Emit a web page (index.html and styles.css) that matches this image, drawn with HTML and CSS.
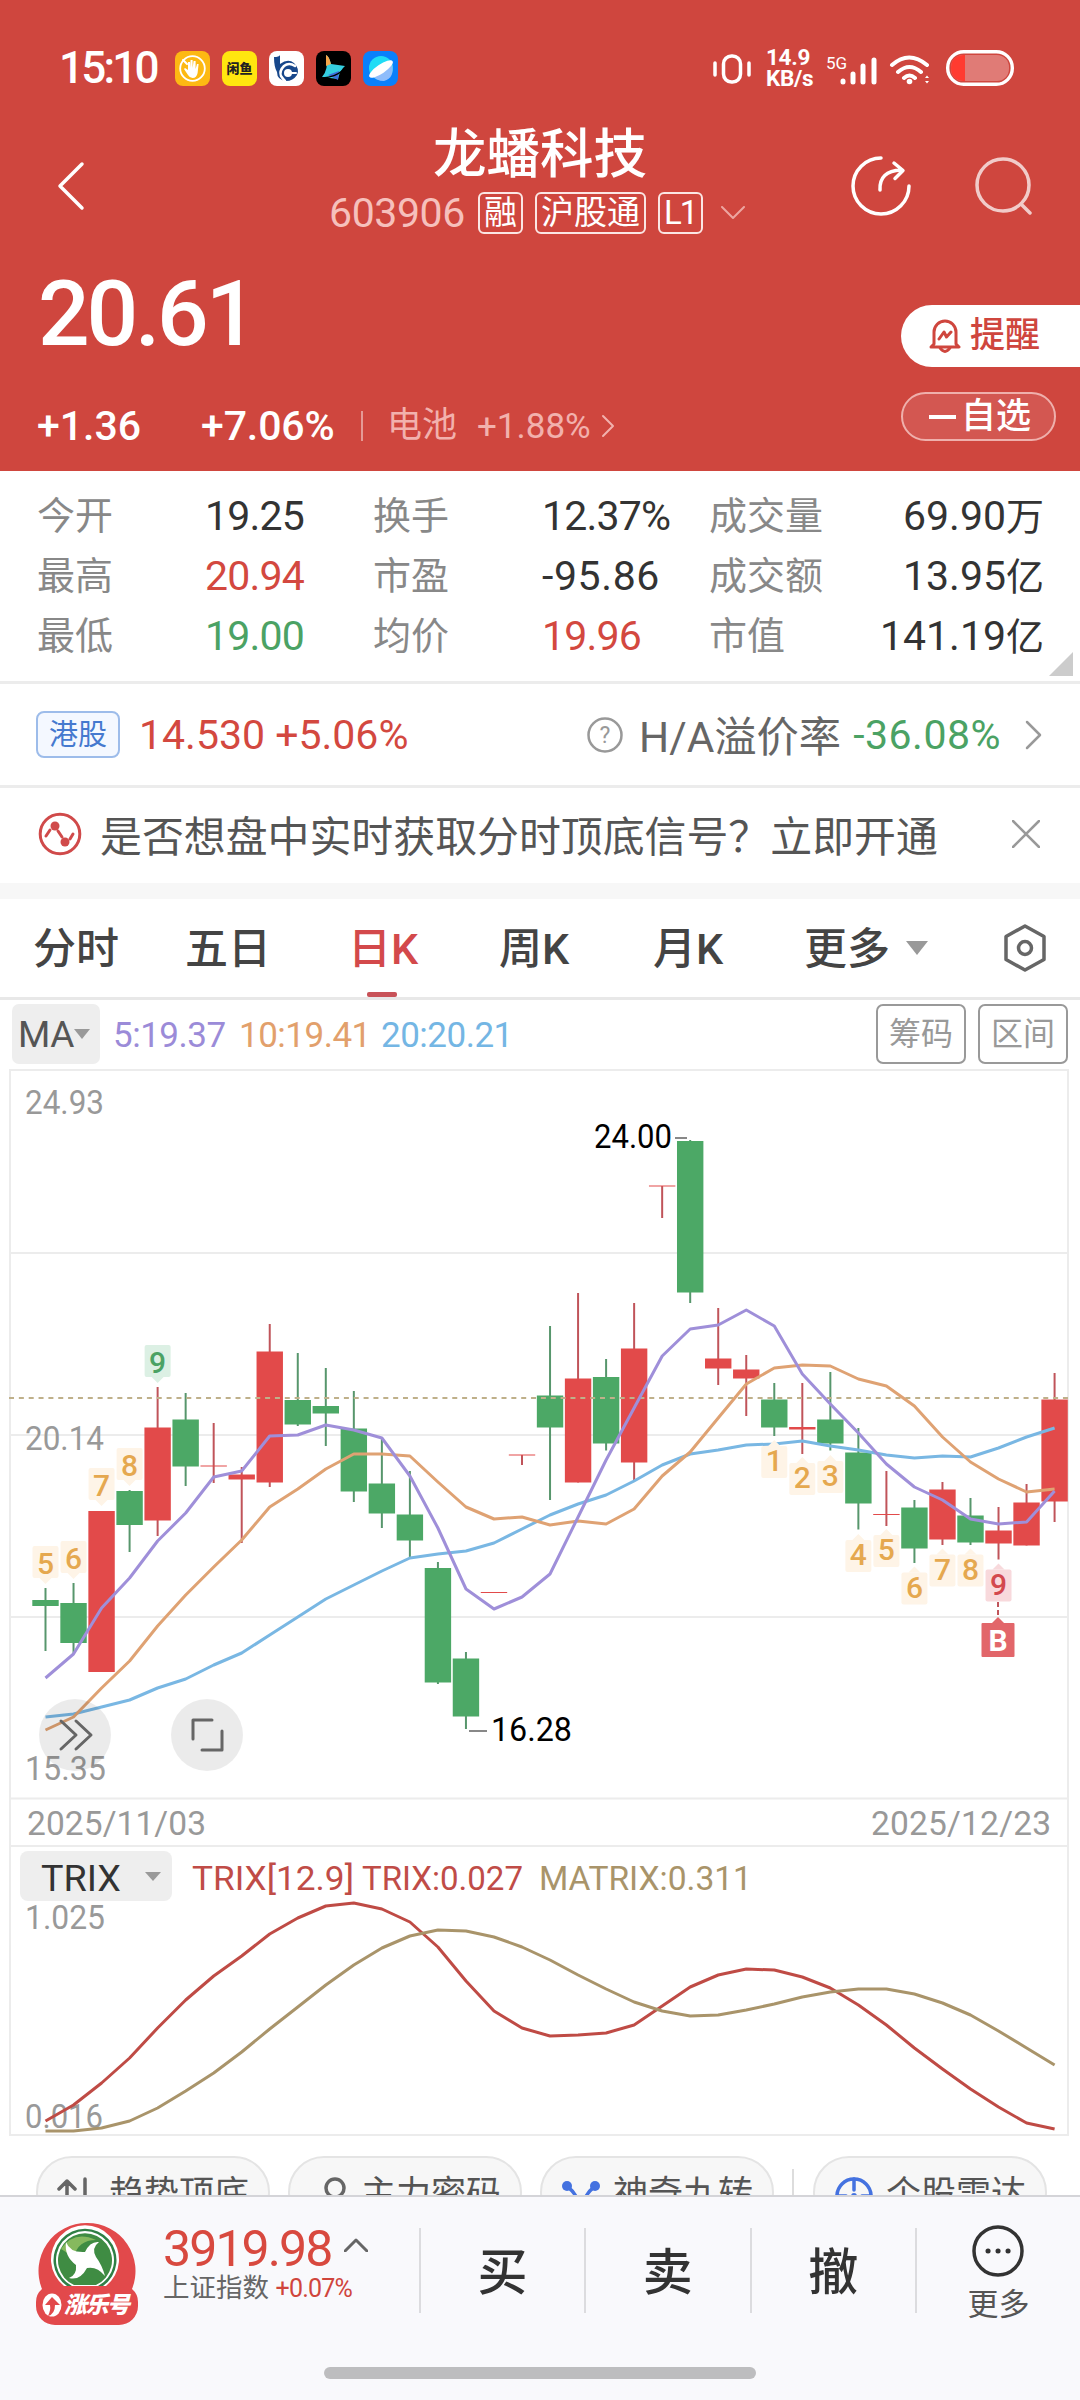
FILE: index.html
```html
<!DOCTYPE html>
<html lang="zh-CN">
<head>
    <meta charset="utf-8">
    <title>龙蟠科技 603906</title>
    <link rel="stylesheet" href="styles.css">
</head>
<body>
    <header class="top">
        <div class="status">
            <span class="clock">15:10</span>
            <div class="apps">
                <svg viewBox="0 0 35 35"><rect width="35" height="35" rx="8" fill="#fdb913"/><circle cx="17.5" cy="17.5" r="12.3" fill="none" stroke="#fff" stroke-width="1.8"/><path d="M13 24l-4-6 1-1 3 2v-8h2v6l.6-8h2v8l1-7h2v8l1.4-5h1.6l-1 9q-1 5-5 5-3 0-4.600-3z" fill="#fff"/><path d="M8 9l4 4" stroke="#fff" stroke-width="2"/></svg>
                <svg viewBox="0 0 35 35"><rect width="35" height="35" rx="8" fill="#ffe60f"/><text x="17.500" y="22" text-anchor="middle" class="xianyu">闲鱼</text></svg>
                <svg viewBox="0 0 35 35"><rect width="35" height="35" rx="8" fill="#fff"/><path d="M5 6q5 0 6-2v9q8-6 14-1 6 6 3 12-4 6-11 6-9-1-9-9-3-5-3-15z" fill="#17478b"/><path d="M26 15q-6-4-11 0-5 5-3 10 2 3 4 5" fill="none" stroke="#fff" stroke-width="2.500"/><circle cx="19" cy="22" r="4" fill="#fff"/><path d="M18 22h9" stroke="#fff" stroke-width="2"/></svg>
                <svg viewBox="0 0 35 35"><rect width="35" height="35" rx="8" fill="#000"/><path d="M10 4q3 1 5 9 7 1 14 2-5 4-7 13l-16-2q7-8 4-22z" fill="#35cfe0"/><path d="M10 4q3 1 5 9l-5 2z" fill="#f7a64a"/><path d="M12 24l10 5 1-9z" fill="#3d6fdc"/><path d="M7 27q12-1 19-7" fill="none" stroke="#000" stroke-width="1.500"/></svg>
                <svg viewBox="0 0 35 35"><rect width="35" height="35" rx="8" fill="#0a80fb"/><circle cx="18" cy="17" r="12" fill="#20dcf5"/><path d="M29 13q3 14-8 17-8 0-12-6z" fill="#8fbdfb"/><ellipse cx="18" cy="18" rx="14" ry="4.500" transform="rotate(-34 18 18)" fill="#fff"/></svg>
            </div>
            <div class="signals">
                <svg class="vibrate" viewBox="0 0 38 32"><rect x="10.500" y="3" width="17" height="26" rx="8" /><path d="M2 10v12M36 10v12"/></svg>
                <div class="speed"><span>14.9</span><span>KB/s</span></div>
                <svg class="cell" viewBox="0 0 52 34"><text x="0" y="17">5G</text><path d="M17 29v1M27 22v8M37 14v16M48 8v22"/></svg>
                <svg class="wifi" viewBox="0 0 42 32"><path d="M3 11q17-15 35 0M9 18q11.500-10 23 0M15 24q5.500-5 11 0"/><circle cx="20.500" cy="27.500" r="2.800"/><path class="arrows" d="M36 24l2-2.500 2 2.500zM36 27l2 2.500 2-2.500z"/></svg>
                <svg class="battery" viewBox="0 0 68 36"><rect x="1.700" y="1.700" width="64.600" height="32.600" rx="16"/><rect class="level" x="5" y="5" width="58" height="26" rx="12"/><path class="low" d="M19 5v26h-2q-12-1-12-13t12-13z"/></svg>
            </div>
        </div>

        <div class="titlebar">
            <svg class="back" viewBox="0 0 30 50"><path d="M26 3L4 25l22 22"/></svg>
            <div class="name">
                <h1>龙蟠科技</h1>
                <div class="code">
                    <span class="num">603906</span>
                    <b>融</b><b>沪股通</b><b class="level-tag">L1</b>
                    <svg viewBox="0 0 24 14"><path d="M1 1l11 11L23 1"/></svg>
                </div>
            </div>
            <svg class="share" viewBox="0 0 60 60"><path d="M30 2A28 28 0 1 0 58 30"/><path d="M29 34q-1-19 21-20M43 7l9 7.500-8 8"/></svg>
            <svg class="search" viewBox="0 0 60 60"><circle cx="29" cy="28" r="26"/><path d="M47 47l9 9"/></svg>
        </div>

        <div class="quote">
            <div class="quote-left">
                <div class="price">20.61</div>
                <div class="change">
                    <span class="diff">+1.36</span>
                    <span class="pct">+7.06%</span>
                    <i></i>
                    <span class="sector">电池</span>
                    <span class="sector-pct">+1.88%</span>
                    <svg viewBox="0 0 14 24"><path d="M2 2l10 10L2 22"/></svg>
                </div>
            </div>
            <div class="quote-right">
                <div class="remind">
                    <svg viewBox="0 0 32 36"><path d="M5 26V14a11 11 0 0 1 22 0v12l3 3H2zM11 30q5 7 10 0M10 21l5-7 2.500 5 4.500-5"/></svg>
                    <span>提醒</span>
                </div>
                <div class="watch"><i></i><span>自选</span></div>
            </div>
        </div>
    </header>

    <section class="stats">
        <span>今开</span><b>19.25</b><span>换手</span><b>12.37%</b><span>成交量</span><b class="last">69.90<em>万</em></b>
        <span>最高</span><b class="up">20.94</b><span>市盈</span><b class="neg">-95.86</b><span>成交额</span><b class="last">13.95<em>亿</em></b>
        <span>最低</span><b class="down">19.00</b><span>均价</span><b class="up">19.96</b><span>市值</span><b class="last">141.19<em>亿</em></b>
        <svg class="corner" viewBox="0 0 24 24"><path d="M24 0v24H0z"/></svg>
    </section>

    <section class="hk">
        <span class="hk-tag">港股</span>
        <b class="up">14.530 +5.06%</b>
        <svg class="help" viewBox="0 0 36 36"><circle cx="18" cy="18" r="16.500"/><text x="18" y="26" text-anchor="middle">?</text></svg>
        <span class="premium">H/A溢价率</span>
        <b class="down">-36.08%</b>
        <svg class="go" viewBox="0 0 18 30"><path d="M2 2l13 13L2 28"/></svg>
    </section>

    <section class="notice">
        <svg class="signal" viewBox="0 0 44 44"><circle cx="22" cy="22" r="19.800"/><path d="M8 24l4-6M20 19l4 6M32 27l3-5"/><circle class="dot" cx="17" cy="14" r="4.500"/><circle class="dot" cx="27" cy="30" r="4.500"/></svg>
        <p>是否想盘中实时获取分时顶底信号？立即开通</p>
        <svg class="close" viewBox="0 0 28 28"><path d="M1 1l26 26M27 1L1 27"/></svg>
    </section>

    <nav class="tabs">
        <span>分时</span><span>五日</span><span class="active">日K</span><span>周K</span><span>月K</span><span>更多</span>
        <svg class="tri" viewBox="0 0 22 14"><path d="M0 0h22L11 14z"/></svg>
        <svg class="gear" viewBox="0 0 44 48"><path d="M22 2l19 10.500v23L22 46 3 35.500v-23z"/><circle cx="22" cy="24" r="6.500"/></svg>
    </nav>

    <section class="ma">
        <div class="ma-type">MA<svg viewBox="0 0 16 10"><path d="M0 0h16L8 10z"/></svg></div>
        <span class="ma5">5:19.37</span>
        <span class="ma10">10:19.41</span>
        <span class="ma20">20:20.21</span>
        <div class="ma-btns"><span>筹码</span><span>区间</span></div>
    </section>

    <svg id="chart" viewBox="0 1064 1080 1076" width="1080" height="1076">
        <g id="grid"></g>
        <g class="axis">
            <text x="25" y="1114" textLength="79">24.93</text>
            <text x="25" y="1450" textLength="79">20.14</text>
            <text x="25" y="1780" textLength="81">15.35</text>
            <text x="27" y="1835" textLength="179" lengthAdjust="spacing">2025/11/03</text>
            <text x="871" y="1835" textLength="180" lengthAdjust="spacing">2025/12/23</text>
            <text x="25" y="1929" textLength="80">1.025</text>
            <text x="25" y="2128" textLength="78">0.016</text>
        </g>
        <g id="candles"></g>
        <path class="last-price" d="M9 1398H1069"/>
        <g id="lines"></g>
        <g id="badges"></g>
        <g class="extreme">
            <text x="594" y="1148" textLength="78">24.00</text>
            <path d="M675 1138h12M469 1731h18"/>
            <text x="491" y="1741" textLength="81">16.28</text>
        </g>
        <g class="tools">
            <circle cx="75" cy="1735" r="36"/>
            <circle cx="207" cy="1735" r="36"/>
            <path d="M61 1721l15 14-15 14M76 1721l15 14-15 14"/>
            <path d="M193 1739v-19h19M222 1731v19h-20"/>
        </g>
        <g class="trix">
            <rect x="20" y="1851" width="152" height="50" rx="8"/>
            <text class="t-name" x="41" y="1891" textLength="80">TRIX</text>
            <path d="M145 1872h16l-8 9z"/>
            <text class="t-red" x="192" y="1890" textLength="162">TRIX[12.9]</text>
            <text class="t-red" x="362" y="1890" textLength="161">TRIX:0.027</text>
            <text class="t-tan" x="539" y="1890" textLength="213">MATRIX:0.311</text>
        </g>
    </svg>

    <section class="chips">
        <div class="chip"><svg viewBox="0 0 40 40"><path d="M10 36V5M2 13l8-8 8 8M28 3v32"/></svg><span>趋势顶底</span></div>
        <div class="chip"><svg viewBox="0 0 40 40"><circle cx="26" cy="12" r="9"/><path d="M21 20l-6 14M31 20l4 14"/></svg><span>主力密码</span></div>
        <div class="chip blue"><svg viewBox="0 0 40 40"><circle class="fill" cx="6" cy="10" r="5"/><circle class="fill" cx="34" cy="10" r="5"/><path d="M8 12q8 6 11 20M32 12q-8 6-11 20"/></svg><span>神奇九转</span></div>
        <i></i>
        <div class="chip blue"><svg viewBox="0 0 40 40"><circle cx="20" cy="20" r="17"/><path d="M20 3v11M3 20h9M28 20h9"/><circle class="fill" cx="20" cy="20" r="3"/></svg><span>个股雷达</span></div>
    </section>

    <footer class="bottom">
        <div class="bar">
            <svg class="logo" viewBox="0 0 102 104">
                <path d="M51 1A48 48 0 0 1 96 67Q102 72 102 80v4a19 19 0 0 1-19 19H19A19 19 0 0 1 0 84v-4Q0 72 6 67A48 48 0 0 1 51 1z" fill="#e2494b"/>
                <path d="M28 64A34 34 0 1 1 70 64z" fill="#fff"/>
                <path d="M31 64A31.500 31.500 0 1 1 67 64z" fill="#2f7f45"/>
                <path d="M36 64A29 29 0 1 1 62 64z" fill="#fff"/>
                <path d="M38 63A27 27 0 1 1 60 63z" fill="#3f8c43"/>
                <path d="M25 27q13-19 35-9-18 0-22 17z" fill="#86b95e"/>
                <path d="M30 20Q34 31 49 30q5-11 14-10-8 6-3 15 6 8 9 19-8-10-18-8-7 13-18 10 8-3 7-13-12-9-10-23z" fill="#fff"/>
                <ellipse cx="16" cy="83" rx="9.500" ry="11.500" fill="#fff"/>
                <path d="M16 75l8 8h-5q0 9-7 11 3-6 2-11h-5z" fill="#e2494b"/>
                <text x="28" y="91" textLength="66">涨乐号</text>
            </svg>
            <div class="index">
                <div class="index-val">3919.98<svg viewBox="0 0 24 14"><path d="M1 13L12 2l11 11"/></svg></div>
                <div class="index-name">上证指数 <span>+0.07%</span></div>
            </div>
            <div class="act">买</div>
            <div class="act">卖</div>
            <div class="act">撤</div>
            <div class="act more">
                <svg viewBox="0 0 52 52"><circle cx="26" cy="26" r="24"/><path d="M16 26h.1M26 26h.1M36 26h.1"/></svg>
                <span>更多</span>
            </div>
        </div>
        <div class="home"></div>
    </footer>
    <script src="chart.js"></script>
</body>
</html>
```
FILE: styles.css
```css
* { box-sizing: border-box; }

body {
    margin: 0;
    width: 1080px;
    height: 2400px;
    overflow: hidden;
    background: #fff;
    color: #333;
    font-family: Roboto, "Noto Sans CJK SC", sans-serif;
}

svg { display: block; flex: none; fill: none; stroke-linecap: round; stroke-linejoin: round; }
b, em, i { font-weight: normal; font-style: normal; }
h1, p { margin: 0; }
.up { color: #d3483f; }
.down { color: #4ba264; }

/* header */
.top { height: 471px; background: #cf463e; color: #fff; }

.status { display: flex; height: 104px; padding: 33px 66px 0 59px; align-items: flex-start; }
.clock { width: 116px; line-height: 70px; font-size: 44px; font-weight: 500; letter-spacing: -2.8px; }
.apps { display: flex; gap: 12px; padding-top: 18px; }
.apps svg { width: 35px; height: 35px; }
.xianyu { font-size: 13px; font-weight: 900; fill: #222; }
.signals { display: flex; margin-left: auto; padding-top: 17px; stroke: #fff; }
.signals svg { stroke: #fff; stroke-width: 4; }
.signals .vibrate { width: 38px; height: 32px; margin: 3px 15px 0 0; stroke-width: 3.5; }
.speed { display: flex; flex-direction: column; width: 60px; margin-top: -3px; font-size: 22.5px; line-height: 21px; font-weight: 700; stroke: none; letter-spacing: -0.3px; }
.signals .cell { width: 52px; height: 34px; margin: 2px 11px 0 0; stroke-width: 5; }
.cell text { font-size: 17px; fill: #fff; stroke: none; }
.signals .wifi { width: 42px; height: 32px; margin: 4px 15px 0 0; }
.wifi circle, .signals .arrows { fill: #fff; stroke: none; }
.battery { width: 68px; height: 36px; }
.battery rect { stroke-width: 3.4; }
.battery .level { fill: #e07b76; stroke: none; }
.battery .low { fill: #ff3b30; stroke: none; }

.titlebar { display: flex; height: 156px; padding: 0 46px 0 56px; }
.titlebar > svg { stroke: #fff; stroke-width: 3.5; }
.back { width: 30px; height: 50px; margin-top: 57px; }
.name { width: 600px; margin: 16px 0 0 179px; }
.name h1 { padding-left: 168px; font-size: 53.5px; line-height: 70px; font-weight: 500; }
.code { display: flex; align-items: center; height: 44px; margin-top: 1px; padding-left: 64px; }
.code .num { width: 149px; color: #f6c0bc; font-size: 41px; letter-spacing: -0.4px; }
.code b { height: 42px; margin-right: 12px; padding: 0 4px; border: 2px solid #fbe6e4; border-radius: 6px; font-size: 33px; line-height: 38px; }
.code .level-tag { width: 45px; letter-spacing: -2px; }
.code svg { width: 24px; height: 14px; margin-left: 6px; stroke: #eda5a0; stroke-width: 2; }
.share { width: 60px; height: 60px; margin: 52px 0 0 -14px; }
.search { width: 60px; height: 60px; margin: 53px 0 0 63px; opacity: .72; }

.quote { display: flex; justify-content: space-between; }
.quote-left { padding-left: 37px; }
.price { height: 113px; padding: 2px 0 0 1px; font-size: 91px; line-height: 105px; font-weight: 500; letter-spacing: -3.2px; }
.change { display: flex; align-items: center; height: 106px; font-size: 41px; }
.diff { width: 164px; font-weight: 500; }
.pct { width: 160px; font-weight: 500; letter-spacing: -0.1px; }
.change i { width: 2px; height: 30px; margin-right: 24px; background: #e59a95; }
.sector { width: 90px; color: #f2b1ad; font-size: 35px; line-height: 40px; }
.sector-pct { width: 124px; color: #f2b1ad; font-size: 35px; }
.change svg { width: 14px; height: 24px; stroke: #f2b1ad; stroke-width: 2; }
.quote-right { width: 179px; padding-top: 45px; }
.remind { display: flex; align-items: center; height: 62px; padding-left: 28px; border-radius: 31px 0 0 31px; background: #fff; color: #cf463e; font-size: 35px; font-weight: 500; line-height: 60px; }
.remind svg { width: 32px; height: 36px; margin-right: 9px; stroke: #cf463e; stroke-width: 3; }
.watch { display: flex; align-items: center; width: 155px; height: 49px; margin-top: 25px; padding-left: 26px; border: 2px solid #efb0ac; border-radius: 25px; background: #d35751; font-size: 35px; line-height: 44px; font-weight: 500; }
.watch i { width: 27px; height: 4px; margin-right: 5px; background: #fff; }

/* quote table */
.stats {
    position: relative;
    display: grid;
    grid-template-columns: 168px 168px 169px 167px 140px 195px;
    grid-auto-rows: 60px;
    height: 213px;
    padding: 15px 36px 0 37px;
    border-bottom: 3px solid #ececec;
    font-size: 41px;
    line-height: 60px;
}
.stats span { color: #888; font-size: 38px; white-space: nowrap; }
.stats b { font-weight: 450; letter-spacing: -0.8px; white-space: nowrap; }
.stats .neg { letter-spacing: 0.6px; }
.stats .last { text-align: right; letter-spacing: 0; }
.stats em { font-size: 38px; letter-spacing: 0; }
.corner { position: absolute; right: 7px; bottom: 5px; width: 24px; height: 24px; fill: #ccc; }

.hk { display: flex; align-items: center; height: 104px; padding: 0 37px 0 36px; border-bottom: 3px solid #ececec; font-size: 41px; }
.hk b { font-weight: 450; letter-spacing: 0; white-space: nowrap; }
.hk-tag { width: 84px; height: 47px; margin-right: 19px; border: 2px solid #9dbcea; border-radius: 8px; background: #f4f8ff; color: #4579cf; font-size: 29px; line-height: 45px; text-align: center; }
.help { width: 36px; height: 36px; margin-left: auto; stroke: #999; stroke-width: 2.5; }
.help text { fill: #999; stroke: none; font-size: 23px; }
.premium { margin: 0 12px 0 16px; padding-bottom: 3px; color: #666; font-size: 42.3px; }
.hk .down { letter-spacing: 0.5px; }
.go { width: 18px; height: 30px; margin-left: 24px; stroke: #999; stroke-width: 2.5; }

.notice { display: flex; align-items: center; height: 111px; padding: 0 40px 4px 38px; border-bottom: 16px solid #f7f7f7; }
.signal { width: 44px; height: 44px; stroke: #d04a4a; stroke-width: 3; }
.signal .dot { fill: #d04a4a; stroke: none; }
.notice p { margin-left: 18px; padding-bottom: 1px; color: #555; font-size: 41.9px; white-space: nowrap; }
.close { width: 28px; height: 28px; margin-left: auto; stroke: #999; stroke-width: 2.5; }

/* period tabs */
.tabs { display: grid; grid-template-columns: 152px 163px 151px 154px 151px 102px 97px 44px; align-items: center; height: 101px; padding-left: 33px; border-bottom: 3px solid #e8e8e8; font-size: 43px; line-height: 98px; white-space: nowrap; color: #444; font-weight: 500; }
.tabs span { height: 98px; padding-top: 3px; line-height: 95px; }
.tabs .active { color: #d3494b; position: relative; }
.tabs .active::after { content: ""; position: absolute; left: 19px; bottom: 0; width: 30px; height: 5px; border-radius: 2px; background: #c85258; }
.tri { width: 22px; height: 14px; fill: #999; }
.gear { width: 44px; height: 48px; stroke: #666; stroke-width: 3.5; }

.ma { display: flex; align-items: center; height: 64px; padding: 4px 12px 0; font-size: 35px; font-weight: 450; letter-spacing: -0.5px; }
.ma > span { padding-top: 2px; }
.ma-type { display: flex; align-items: center; width: 88px; height: 60px; margin-right: 13px; padding-left: 6px; border-radius: 7px; background: #eee; color: #555; font-size: 37px; font-weight: 400; }
.ma-type svg { width: 16px; height: 10px; fill: #999; }
.ma5 { width: 126px; color: #9b8bd8; }
.ma10 { width: 142px; color: #e2a06c; }
.ma20 { color: #74b6e4; }
.ma-btns { display: flex; gap: 12px; margin-left: auto; }
.ma-btns span { width: 90px; height: 60px; border: 2px solid #999; border-radius: 7px; color: #999; font-size: 32px; font-weight: 400; line-height: 56px; text-align: center; letter-spacing: 0; }

/* chart */
#chart { font-size: 33.5px; stroke-linecap: butt; }
#chart text { stroke: none; }
#grid path { stroke: #ececec; stroke-width: 2; }
.axis text { fill: #999; font-weight: 450; }
.red { fill: #e24a4a; stroke: #c0545a; }
.green { fill: #4ca866; stroke: #57966c; }
.body { stroke: none; }
.last-price { stroke: #bfb08a; stroke-width: 2; stroke-dasharray: 5 4.85; }
.line { stroke-width: 3; }
.l5 { stroke: #9f8fd9; }
.l10 { stroke: #dfa273; }
.l20 { stroke: #79b7e3; }
.l-trix { stroke: #bf4b45; }
.l-matrix { stroke: #a9946a; }
#chart .badge text { font-size: 30px; font-weight: 500; text-anchor: middle; }
.b-orange { fill: #fef4e7; }
.b-orange text { fill: #e5a84f; }
.b-green { fill: #dcf0e4; }
.b-green text { fill: #4ba264; }
.b-red { fill: #f8d9dc; }
.b-red text { fill: #d3484e; }
.b-buy { fill: #e2666a; }
#chart .b-buy text { fill: #fff; font-weight: 700; }
.tail { stroke: #c0545a; stroke-width: 2; stroke-dasharray: 5 3; }
.extreme text { fill: #000; font-weight: 400; }
.extreme path { stroke: #888; stroke-width: 2; }
.tools circle { fill: rgba(0, 0, 0, .08); }
.tools path { stroke: #666; stroke-width: 3; stroke-linecap: round; }
.trix rect { fill: #eee; }
.trix path { fill: #999; }
.trix text { font-weight: 450; }
.trix .t-name { fill: #333; font-size: 37px; font-weight: 400; }
.t-red { fill: #c04c47; }
.t-tan { fill: #a9946a; }

/* shortcut chips, cut off by the bottom bar */
.chips { display: flex; height: 55px; padding: 16px 33px 0 36px; overflow: hidden; }
.chip { display: flex; flex: none; width: 234px; height: 72px; margin-right: 18px; padding: 13px 0 0 19px; border: 2px solid #e4e4e4; border-radius: 36px; background: #f7f7f7; color: #555; font-size: 35px; line-height: 48px; }
.chip svg { width: 40px; height: 40px; margin: 5px 12px 0 0; stroke: #666; stroke-width: 3.5; }
.chip.blue svg { stroke: #4472e0; }
.chip .fill { fill: #4472e0; stroke: none; }
.chips i { flex: none; width: 2px; height: 60px; margin: 13px 19px 0 0; background: #ddd; }

/* bottom bar */
.bottom { height: 205px; border-top: 2px solid #d4d4d8; background: #f9f9fc; }
.bar { display: flex; padding-top: 31px; height: 170px; }
.logo { width: 102px; height: 104px; margin: -6px 0 0 36px; }
.logo text { fill: #fff; font-size: 23px; font-weight: 900; font-style: italic; }
.index { width: 255px; padding-left: 25px; margin-right: 27px; }
.index-val { display: flex; height: 41px; align-items: center; color: #d8493f; font-size: 50px; font-weight: 450; letter-spacing: -1.9px; }
.index-val svg { width: 24px; height: 14px; margin: -8px 0 0 12px; stroke: #666; stroke-width: 3; }
.index-name { color: #666; font-size: 26.5px; line-height: 38px; white-space: nowrap; }
.index-name span { color: #d0453c; font-size: 25px; font-weight: 450; letter-spacing: -0.8px; }
.act { width: 166px; height: 85px; border-left: 2px solid #dcdcdf; font-size: 50px; font-weight: 500; line-height: 90px; text-align: center; }
.more { display: flex; flex-direction: column; align-items: center; }
.act.more span { color: #555; font-size: 31px; font-weight: 400; line-height: 56px; }
.more svg { width: 52px; height: 52px; margin-top: -3px; stroke: #333; stroke-width: 3.500; }
.more path { stroke-width: 5; }
.home { width: 432px; height: 12px; margin: 0 auto; border-radius: 6px; background: #bdbdbf; }
```
FILE: chart.js
```js
const NS = "http://www.w3.org/2000/svg";
const X0 = 45.5;
const STEP = 28.03;

function add(parent, tag, attrs, text) {
    const el = document.createElementNS(NS, tag);
    for (const k in attrs) el.setAttribute(k, attrs[k]);
    if (text) el.textContent = text;
    parent.appendChild(el);
    return el;
}
const $ = id => document.getElementById(id);
const x = i => X0 + i * STEP;

// grid
[1070, 1253, 1435, 1617, 1798.5, 1846, 2135].forEach(y => add($("grid"), "path", { d: `M9 ${y}H1069` }));
add($("grid"), "path", { d: "M10 1070V2135M1068 1070V2135" });

// [color, high, body top, body bottom, low]
const candles = [
    ["green", 1588, 1600, 1606, 1651], ["green", 1583, 1603, 1643, 1653],
    ["red", 1511, 1511, 1672, 1672], ["green", 1490, 1491, 1525, 1552],
    ["red", 1387, 1427.5, 1520.5, 1536], ["green", 1393, 1419.5, 1466.5, 1486],
    ["red", 1423, 1465.5, 1466.5, 1483], ["red", 1467, 1474.5, 1479.5, 1543],
    ["red", 1324, 1351.5, 1482.5, 1487], ["green", 1353, 1400, 1424.5, 1426],
    ["green", 1368, 1406, 1413.5, 1446], ["green", 1391, 1428.5, 1491.5, 1502],
    ["green", 1438, 1483.5, 1513.5, 1528], ["green", 1471, 1514.5, 1540.5, 1558],
    ["green", 1562, 1568, 1682.5, 1684], ["green", 1652, 1658.5, 1716.5, 1729],
    ["red", 1592, 1592, 1593, 1593], ["red", 1455, 1454.5, 1455.5, 1465],
    ["green", 1326, 1395.5, 1427.5, 1500], ["red", 1293, 1378.5, 1482.5, 1482.5],
    ["green", 1359, 1377, 1443.5, 1450.5], ["red", 1303, 1348.5, 1462.5, 1480],
    ["red", 1186, 1185.5, 1186.5, 1218], ["green", 1140, 1141, 1292.5, 1303],
    ["red", 1308, 1358.5, 1368.5, 1385], ["red", 1355, 1369.5, 1378.5, 1416],
    ["green", 1383, 1399.5, 1427.5, 1436], ["red", 1383, 1427, 1429.5, 1454],
    ["green", 1372, 1419.5, 1443.5, 1450.5], ["green", 1428, 1452.5, 1503.5, 1529.5],
    ["red", 1471, 1514, 1515, 1526], ["green", 1500, 1507.5, 1548.5, 1563],
    ["red", 1482, 1489.5, 1539.5, 1545], ["green", 1498, 1515.5, 1542.5, 1545],
    ["red", 1507, 1530.5, 1543.5, 1559.5], ["red", 1484, 1502.5, 1545.5, 1545.5],
    ["red", 1373, 1399.5, 1501.5, 1522]
];
candles.forEach(([color, high, top, bottom, low], i) => {
    add($("candles"), "path", { class: color, "stroke-width": 2, d: `M${x(i)} ${high}V${low}` });
    add($("candles"), "rect", { class: color + " body", x: x(i) - 13.2, y: top, width: 26.4, height: bottom - top });
});

const lines = {
    l20: [1717, 1714, 1707, 1700, 1688, 1679, 1665, 1653, 1635, 1617, 1599, 1585, 1571, 1558, 1554, 1551, 1543, 1529, 1515, 1504, 1495, 1481, 1465, 1454, 1450, 1445, 1444, 1441, 1446, 1450, 1455, 1458, 1456, 1457, 1448, 1437, 1428],
    l10: [1730, 1717, 1688, 1661, 1626, 1595, 1567, 1540, 1507, 1489, 1469, 1454, 1454, 1456, 1482, 1507, 1519, 1517, 1525, 1521, 1524, 1509, 1476, 1452, 1418, 1384, 1368, 1365, 1366, 1379, 1386, 1406, 1437, 1462, 1479, 1492, 1489],
    l5: [1678, 1654, 1608, 1578, 1541, 1513, 1477, 1471, 1436, 1435, 1425, 1430, 1438, 1476, 1528, 1589, 1609, 1597, 1574, 1517, 1460, 1408, 1356, 1329, 1325, 1310, 1326, 1374, 1404, 1433, 1464, 1487, 1500, 1519, 1524, 1522, 1491],
    "l-trix": [2121, 2105, 2083, 2058, 2028, 2000, 1976, 1956, 1934, 1918, 1906, 1903, 1909, 1922, 1947, 1981, 2011, 2028, 2036, 2035, 2033, 2025, 2006, 1987, 1975, 1969, 1970, 1977, 1988, 2005, 2025, 2048, 2069, 2089, 2107, 2123, 2129],
    "l-matrix": [2131, 2131, 2128, 2121, 2108, 2091, 2073, 2052, 2029, 2007, 1985, 1965, 1948, 1936, 1930, 1931, 1937, 1947, 1960, 1975, 1989, 2002, 2011, 2016, 2015, 2010, 2004, 1997, 1992, 1989, 1989, 1994, 2003, 2015, 2031, 2048, 2065]
};
for (const name in lines) {
    add($("lines"), "polyline", {
        class: "line " + name,
        points: lines[name].map((y, i) => x(i).toFixed(1) + "," + y).join(" ")
    });
}

// [index, label, top of box, pointer direction, style]
const badges = [
    [0, "5", 1546, "down", "orange"], [1, "6", 1541, "down", "orange"],
    [2, "7", 1468, "down", "orange"], [3, "8", 1448, "down", "orange"],
    [4, "9", 1345, "down", "green"],
    [26, "1", 1446, "up", "orange"], [27, "2", 1463, "up", "orange"],
    [28, "3", 1461, "up", "orange"], [29, "4", 1540, "up", "orange"],
    [30, "5", 1535, "up", "orange"], [31, "6", 1572.5, "up", "orange"],
    [32, "7", 1554.5, "up", "orange"], [33, "8", 1554.5, "up", "orange"],
    [34, "9", 1569.5, "up", "red"]
];
add($("badges"), "path", { class: "tail", d: `M${x(34) - 0.5} 1602v14` });
badges.forEach(([i, label, y, dir, style]) => {
    const g = add($("badges"), "g", { class: "badge b-" + style });
    const cx = x(i);
    add(g, "rect", { x: cx - 13, y: y, width: 26, height: 32, rx: 2 });
    add(g, "path", { d: dir == "down" ? `M${cx - 6} ${y + 32}h12l-6 6z` : `M${cx - 6} ${y}h12l-6 -6z` });
    add(g, "text", { x: cx, y: y + (dir == "down" ? 28 : 25) }, label);
});
const buy = add($("badges"), "g", { class: "badge b-buy" });
add(buy, "rect", { x: 981.5, y: 1623, width: 33, height: 34, rx: 1 });
add(buy, "path", { d: "M991 1624h14l-7-7z" });
add(buy, "text", { x: 998, y: 1651 }, "B");

document.querySelectorAll("#chart text[textLength]:not([lengthAdjust])").forEach(t => {
    t.setAttribute("lengthAdjust", "spacingAndGlyphs");
});
```
